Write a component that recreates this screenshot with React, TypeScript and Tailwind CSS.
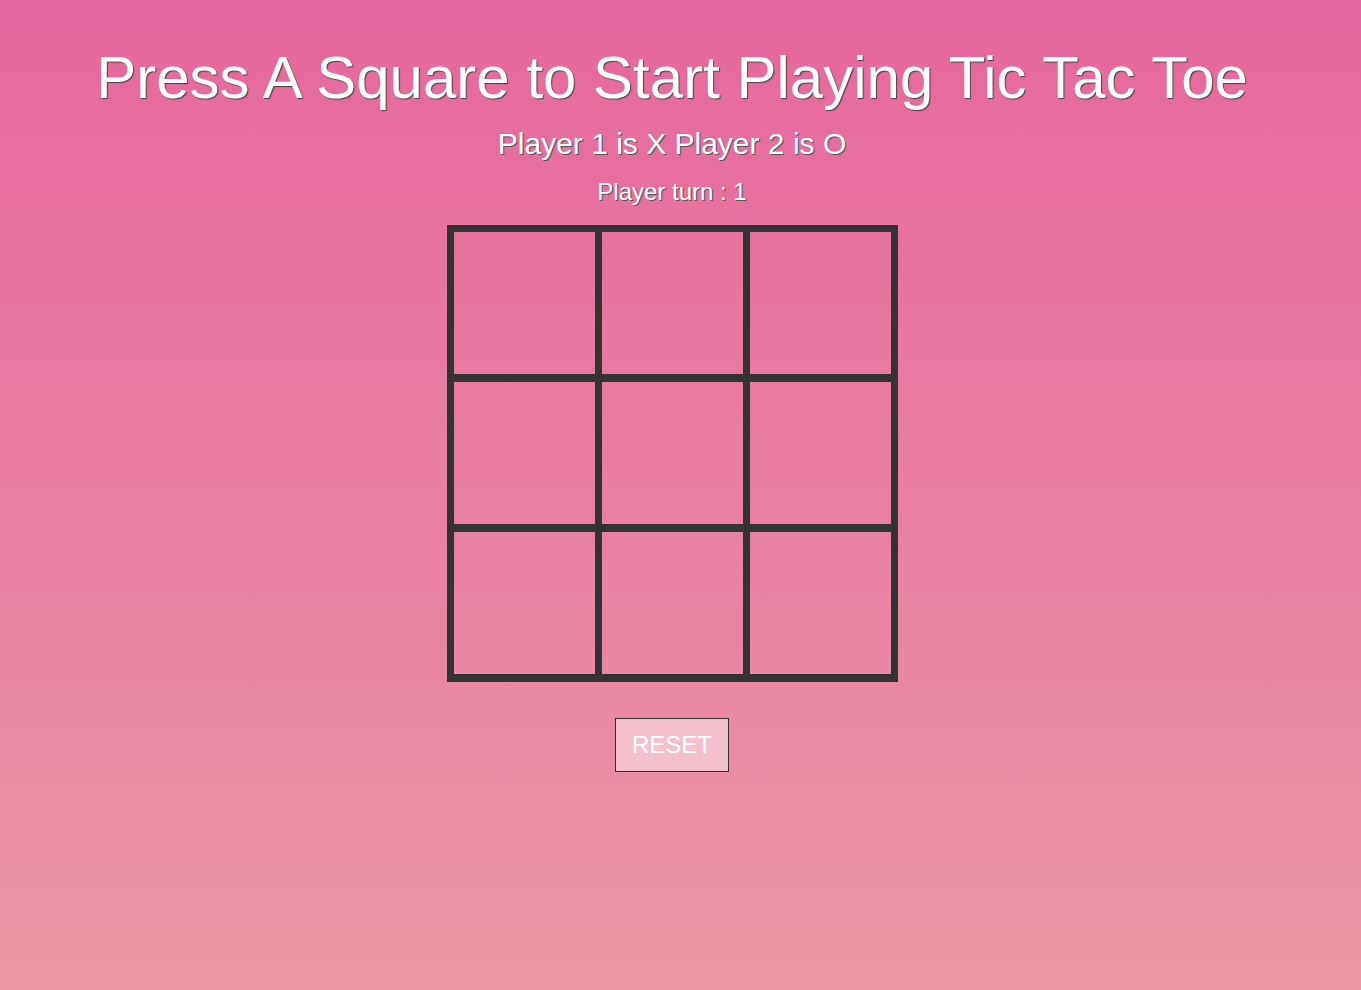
import React from "react";

const cellClasses = [
  "border-r-[7px] border-b-[8px]",
  "border-r-[7px] border-b-[8px]",
  "border-b-[8px]",
  "border-r-[7px] border-b-[8px]",
  "border-r-[7px] border-b-[8px]",
  "border-b-[8px]",
  "border-r-[7px]",
  "border-r-[7px]",
  "",
];

export default function App() {
  return (
    <div className="min-h-[990px] w-full bg-[linear-gradient(to_bottom,#e6679e,#eb96a6)] font-['Liberation_Sans',Arial,sans-serif]">
      <div className="w-[1344px] flex flex-col items-center">
        <h1 className="mt-[42px] text-[60px] leading-[72px] text-white [text-shadow:1px_1px_1px_#444]">
          Press A Square to Start Playing Tic Tac Toe
        </h1>
        <p className="mt-[13px] text-[30px] leading-[34px] text-white [text-shadow:1px_1px_0_#555]">
          Player 1 is X Player 2 is O
        </p>
        <p className="mt-[17px] text-[24px] leading-[28px] text-white [text-shadow:1px_1px_0_#555]">
          Player turn : 1
        </p>
        <div className="mt-[19px] grid grid-cols-[148px_148px_141px] grid-rows-[150px_150px_142px] border-[#333333] border-t-[7px] border-l-[7px] border-r-[7px] border-b-[8px]">
          {cellClasses.map((c, i) => (
            <div key={i} className={`border-[#333333] ${c}`} />
          ))}
        </div>
        <button className="mt-[36px] h-[54px] w-[114px] border border-[#333333] bg-[#f4c0cd] text-[24px] text-white">
          RESET
        </button>
      </div>
    </div>
  );
}
